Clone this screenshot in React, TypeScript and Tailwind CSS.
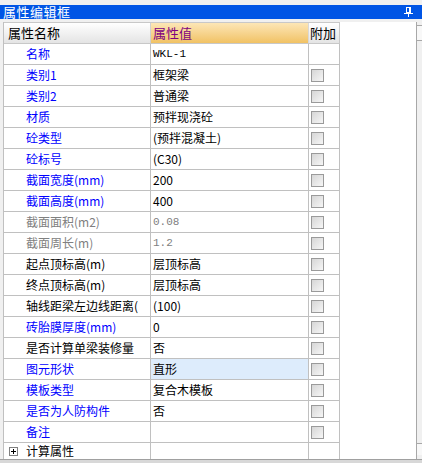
import React from 'react';

type Row = {
  label: string;
  value?: string;
  tone: 'blue' | 'black' | 'gray';
  check?: boolean;
  mono?: boolean;
  active?: boolean;
};

const rows: Row[] = [
  { label: '名称', value: 'WKL-1', tone: 'blue', mono: true },
  { label: '类别1', value: '框架梁', tone: 'blue', check: true },
  { label: '类别2', value: '普通梁', tone: 'blue', check: true },
  { label: '材质', value: '预拌现浇砼', tone: 'blue', check: true },
  { label: '砼类型', value: '(预拌混凝土)', tone: 'blue', check: true },
  { label: '砼标号', value: '(C30)', tone: 'blue', check: true },
  { label: '截面宽度(mm)', value: '200', tone: 'blue', check: true },
  { label: '截面高度(mm)', value: '400', tone: 'blue', check: true },
  { label: '截面面积(m2)', value: '0.08', tone: 'gray', check: true, mono: true },
  { label: '截面周长(m)', value: '1.2', tone: 'gray', check: true, mono: true },
  { label: '起点顶标高(m)', value: '层顶标高', tone: 'black', check: true },
  { label: '终点顶标高(m)', value: '层顶标高', tone: 'black', check: true },
  { label: '轴线距梁左边线距离(', value: '(100)', tone: 'black', check: true },
  { label: '砖胎膜厚度(mm)', value: '0', tone: 'blue', check: true },
  { label: '是否计算单梁装修量', value: '否', tone: 'black', check: true },
  { label: '图元形状', value: '直形', tone: 'blue', check: true, active: true },
  { label: '模板类型', value: '复合木模板', tone: 'blue', check: true },
  { label: '是否为人防构件', value: '否', tone: 'blue', check: true },
  { label: '备注', value: '', tone: 'blue', check: true },
];

const toneClass = {
  blue: 'text-[#0000ff]',
  black: 'text-black',
  gray: 'text-[#808080]',
};

const Check = () => (
  <div className="w-[13px] h-[13px] border border-[#9a9a9a] bg-gradient-to-br from-[#d6d6d6] to-[#f6f6f6]" />
);

const PinIcon = () => (
  <svg width="9" height="10" viewBox="0 0 9 10" fill="none" stroke="white" strokeWidth="1" shapeRendering="crispEdges">
    <path d="M2.5 0.5h4v5h-4z" />
    <path d="M5.5 0.5v5" />
    <path d="M0 6.5h9" />
    <path d="M4.5 6.5v3.5" />
  </svg>
);

export default function App() {
  const font = { fontFamily: '"Noto Sans CJK SC", "Liberation Sans", sans-serif' };
  return (
    <div className="w-[422px] h-[463px] bg-[#f0f0f0] overflow-hidden flex flex-col text-[12px]" style={font}>
      <div className="mt-[5px] h-[14px] bg-[#0055e5] text-white text-[13px] leading-[14px] flex items-center justify-between pl-[3px] pr-[9px]">
        <span className="tracking-[0.5px]">属性编辑框</span>
        <PinIcon />
      </div>
      <div className="mt-[3px] flex-1 flex bg-white overflow-hidden">
        <div className="w-[3px] bg-[#f0f0f0]" />
        <div className="flex flex-col border-l border-[#c0c0c0]">
          {/* header */}
          <div className="flex h-[22px] border-t border-b border-[#c8c8c8] text-[13px]">
            <div className="w-[147px] border-r border-[#d0d0d0] bg-gradient-to-b from-[#ffffff] to-[#e4e4e4] pl-[4px] flex items-center">
              属性名称
            </div>
            <div className="w-[158px] border-r border-[#d8d8d8] bg-gradient-to-b from-[#fce6b6] to-[#f1c263] text-[#800080] pl-[2px] flex items-center">
              属性值
            </div>
            <div className="w-[31px] border-r border-[#c8c8c8] bg-gradient-to-b from-[#ffffff] to-[#e4e4e4] pl-[1px] flex items-center overflow-hidden whitespace-nowrap">
              附加
            </div>
          </div>
          {rows.map((r) => (
            <div key={r.label} className="flex h-[21px] border-b border-[#c0c0c0] shrink-0">
              <div className={`w-[147px] border-r border-[#c0c0c0] pl-[22px] flex items-center overflow-hidden whitespace-nowrap ${toneClass[r.tone]}`}>
                {r.label}
              </div>
              <div
                className={`w-[158px] border-r border-[#c0c0c0] pl-[2px] flex items-center overflow-hidden whitespace-nowrap ${
                  r.active ? 'bg-[#ddecfc]' : ''
                } ${r.tone === 'gray' ? 'text-[#808080]' : 'text-black'}`}
                style={r.mono ? { fontFamily: '"Liberation Mono", monospace', fontSize: '11px' } : undefined}
              >
                {r.value}
              </div>
              <div className="w-[31px] border-r border-[#c0c0c0] flex items-center pl-[2px]">
                {r.check && <Check />}
              </div>
            </div>
          ))}
          <div className="flex h-[16px] shrink-0">
            <div className="w-[147px] border-r border-[#c0c0c0] pl-[5px] flex items-center gap-[8px] text-black whitespace-nowrap">
              <div className="w-[9px] h-[9px] border border-[#808080] bg-white flex items-center justify-center">
                <svg width="5" height="5" viewBox="0 0 5 5" shapeRendering="crispEdges">
                  <path d="M0 2.5h5M2.5 0v5" stroke="black" strokeWidth="1" />
                </svg>
              </div>
              <span className="leading-[14px]">计算属性</span>
            </div>
            <div className="w-[158px] border-r border-[#c0c0c0]" />
            <div className="w-[31px] border-r border-[#c0c0c0]" />
          </div>
        </div>
        <div className="flex-1" />
        <div className="w-[6px] border-l border-[#a8a8a8] bg-[#f0f0f0] flex flex-col pt-[3px]">
          <div className="h-[16px] border-t border-b border-[#a8a8a8] bg-[#f8f8f8]" />
          <div className="flex-1" />
          <div className="h-[12px] border-t border-[#a8a8a8] bg-[#f8f8f8] mb-[4px]" />
        </div>
      </div>
      <div className="h-[4px] border-t border-[#a0a0a0] bg-[#d8d8d8] shrink-0" />
    </div>
  );
}
